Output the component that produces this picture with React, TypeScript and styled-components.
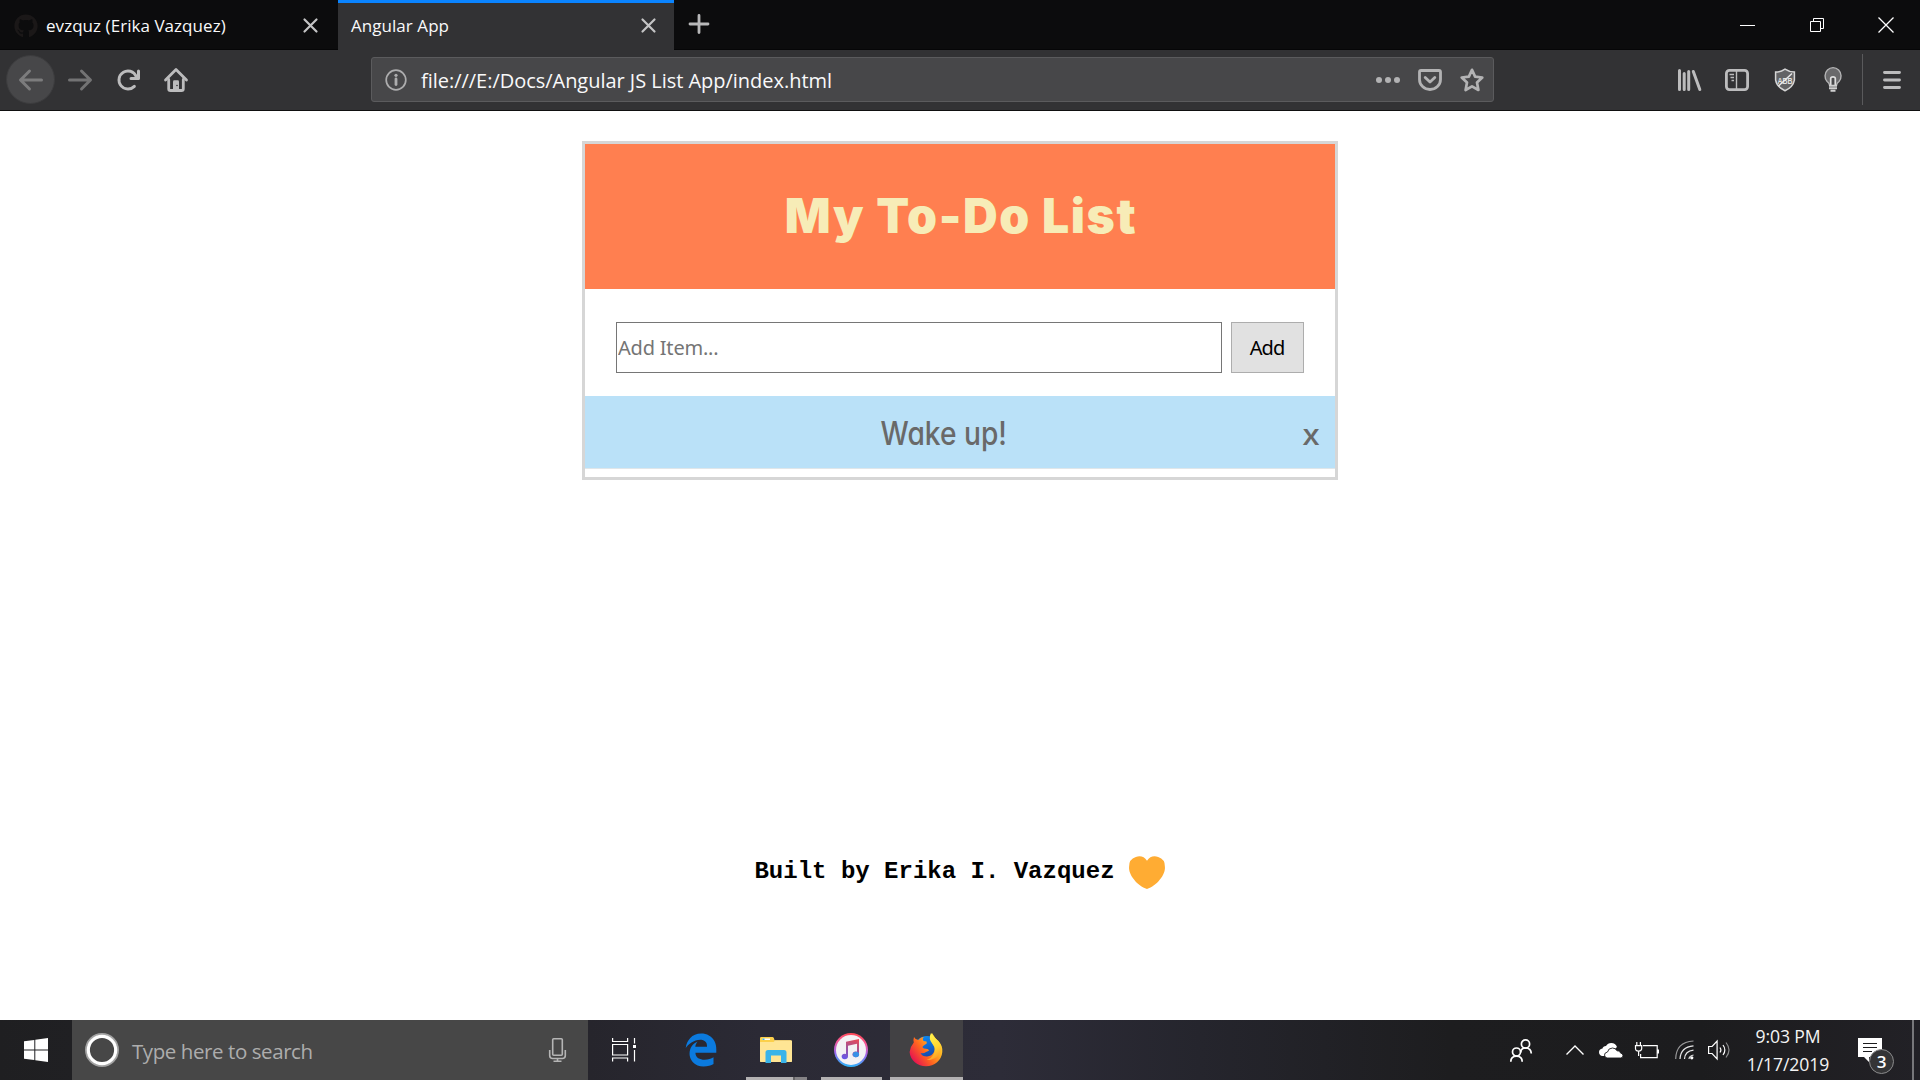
import React from "react";
import styled, { createGlobalStyle } from "styled-components";
import { FaEdgeLegacy, FaGithub } from "react-icons/fa";

const GlobalStyle = createGlobalStyle`
  *, *::before, *::after { box-sizing: border-box; }
  body { margin: 0; overflow: hidden; background: #fff; }
  button, input { margin: 0; font: inherit; }
`;

const ui = `"Open Sans", "Noto Sans", sans-serif`;

const Screen = styled.div`
  display: flex;
  flex-direction: column;
  width: 1920px;
  height: 1080px;
  font-family: ${ui};
`;

/* Icons */

const Glyph = styled.svg<{ $gap?: number }>`
  display: block;
  flex: none;
  margin-left: ${p => p.$gap ?? 0}px;
  overflow: visible;
`;

/* Browser tabs */

const TabStrip = styled.div`
  display: flex;
  flex: none;
  height: 50px;
  background: #0c0c0d;
`;

const Tab = styled.div<{ $active?: boolean; $width: number }>`
  display: flex;
  align-items: center;
  width: ${p => p.$width}px;
  padding: 1px ${p => (p.$active ? 18 : 20)}px 0 13px;
  color: #f9f9fa;
  font-size: 17px;
  background: ${p => (p.$active ? "#323234" : "transparent")};
  box-shadow: ${p => (p.$active ? "inset 0 3px #0a84ff" : "inset 0 -1px #060607")};
`;

const Favicon = styled.span`
  display: flex;
  margin: 1px 8px 0 1px;
  font-size: 24px;
  color: #1b1818;
`;

const TabTitle = styled.span`
  flex: 1;
  white-space: nowrap;
  letter-spacing: 0.05px;
`;

const StripFill = styled.div`
  display: flex;
  flex: 1;
  justify-content: space-between;
  box-shadow: inset 0 -1px #060607;
`;

const NewTab = styled.div`
  padding: 14px 0 0 14px;
`;

const WindowControls = styled.div`
  display: flex;
`;

const WindowControl = styled.div`
  display: grid;
  place-items: center;
  width: 69px;
  height: 50px;
`;

/* Navigation bar */

const NavBar = styled.div`
  display: flex;
  flex: none;
  align-items: center;
  height: 61px;
  padding: 0 0 1px 6px;
  background: #323234;
  border-bottom: 1px solid #0f0f10;
`;

const BackButton = styled.div`
  display: grid;
  place-items: center;
  width: 49px;
  height: 49px;
  background: #474749;
  border: 1px solid #3c3c3e;
  border-radius: 50%;
`;

const UrlBar = styled.div`
  display: flex;
  align-items: center;
  width: 1123px;
  height: 45px;
  margin-left: 183px;
  padding: 0 9px 0 13px;
  background: #474749;
  border: 1px solid #5b5b5d;
  border-radius: 3px;
`;

const UrlText = styled.span`
  flex: 1;
  padding: 1px 0 0 14px;
  color: #f9f9fa;
  font-size: 20px;
  letter-spacing: -0.03px;
  white-space: nowrap;
`;

const Divider = styled.div`
  width: 1px;
  height: 51px;
  margin: 0 20px 0 17px;
  background: #5a5a5c;
`;

/* Web page */

const Page = styled.main`
  display: flex;
  flex: 1;
  flex-direction: column;
  align-items: center;
  padding-top: 30px;
  background: #fff;
`;

const Card = styled.section`
  width: 756px;
  height: 339px;
  border: 3px solid #d6d6d6;
`;

const CardHeader = styled.header`
  display: grid;
  place-items: center;
  height: 145px;
  padding: 0 0 1px 2px;
  background: #ff7f50;
`;

const Title = styled.h1`
  margin: 0;
  color: #f7ecb7;
  font: 900 48px/56px Inter, "Open Sans", sans-serif;
  letter-spacing: 1.6px;
  white-space: nowrap;
`;

const AddForm = styled.form`
  display: flex;
  gap: 9px;
  height: 107px;
  padding: 33px 31px 23px;
  font: 20px "Noto Sans", sans-serif;
`;

const ItemInput = styled.input`
  width: 606px;
  height: 51px;
  padding: 0 1px;
  border: 1px solid #767676;
  border-radius: 0;
  outline: 0;
  letter-spacing: -0.2px;
  &::placeholder { color: #757575; opacity: 1; }
`;

const AddButton = styled.button`
  width: 73px;
  height: 51px;
  padding: 0 1px 0 0;
  color: #000;
  background: #e1e1e1;
  border: 1px solid #adadad;
  border-radius: 0;
  letter-spacing: -1px;
`;

const Item = styled.div`
  display: flex;
  align-items: center;
  height: 73px;
  padding: 4px 16px 0 0;
  color: #696969;
  background: #bae1f8;
  border-bottom: 1px solid #dfe6ea;
  font: 500 32px/40px Inter, sans-serif;
  font-feature-settings: "cv11" 1;
`;

const ItemText = styled.span`
  flex: 1;
  text-align: center;
  white-space: nowrap;
`;

const Narrow = styled.span`
  display: inline-block;
  transform: scaleX(0.88);
`;

const RemoveItem = styled.span`
  padding-top: 1px;
  font-size: 29px;
  transform: scaleX(1.12);
`;

const Footer = styled.footer`
  display: flex;
  align-items: center;
  gap: 14px;
  height: 40px;
  margin-top: 372px;
  padding-right: 1px;
  color: #000;
  font: bold 24px/28px "Liberation Mono", monospace;
  white-space: pre;
`;

const Heart = styled(Glyph)`
  margin-top: 2px;
`;

/* Taskbar */

const Taskbar = styled.div`
  display: flex;
  flex: none;
  height: 60px;
  background: linear-gradient(90deg, #1f1f21 0, #202023 72px, #26252c 590px, #2b2a35 760px, #2d2c38 1000px, #25252d 1200px, #1d1d1f 1450px, #1c1c1e 1700px, #222126 1920px);
`;

const StartButton = styled.div`
  display: grid;
  place-items: center;
  width: 72px;
`;

const SearchBox = styled.div`
  display: flex;
  align-items: center;
  width: 516px;
  padding: 0 22px 0 13px;
  background: #474747;
`;

const SearchText = styled.span`
  flex: 1;
  padding: 1px 0 0 13px;
  color: #adadad;
  font-size: 20.5px;
  letter-spacing: -0.42px;
`;

const TaskButton = styled.div<{ $width: number; $gap?: number; $active?: boolean }>`
  display: flex;
  flex-direction: column;
  align-items: center;
  justify-content: center;
  width: ${p => p.$width}px;
  margin-left: ${p => p.$gap ?? 0}px;
  background: ${p => (p.$active ? "#424144" : "transparent")};
`;

const AppSlot = styled.div<{ $nudge?: number }>`
  display: grid;
  flex: 1;
  place-items: center;
  padding: 3px ${p => p.$nudge ?? 0}px 0 0;
`;

const RunningBar = styled.div<{ $width: number; $stacked?: boolean }>`
  width: ${p => p.$width}px;
  height: 3px;
  background: ${p => (p.$stacked ? "linear-gradient(90deg, #b3b1b2 47px, #656466 47px 49px, #858386 49px)" : "#b3b1b2")};
`;

const Tray = styled.div`
  display: flex;
  align-items: center;
  margin-left: auto;
`;

const Clock = styled.div`
  width: 90px;
  margin-left: 13px;
  color: #f4f4f4;
  font-size: 17.6px;
  line-height: 28px;
  letter-spacing: -0.1px;
  text-align: center;
`;

const Notifications = styled.div`
  position: relative;
  width: 24px;
  margin-left: 25px;
`;

const Badge = styled.span`
  position: absolute;
  left: 11px;
  top: 11px;
  width: 25px;
  height: 25px;
  color: #fff;
  background: #343436;
  border: 1px solid #8b8b8c;
  border-radius: 50%;
  font: 600 17px/23px ${ui};
  text-align: center;
`;

const ShowDesktop = styled.div`
  align-self: stretch;
  width: 8px;
  margin-left: 30px;
  border-left: 2px solid #77777a;
`;

const light = "#bcbcbd";

const TabClose = () => (
  <Glyph width="15" height="15" viewBox="0 0 15 15" stroke="#c4c4c5" strokeWidth="2.2" strokeLinecap="round">
    <path d="M1.5 1.5l12 12M13.5 1.5l-12 12" />
  </Glyph>
);

const arrowPath =
  "M15 7H3.414l4.293-4.293a1 1 0 0 0-1.414-1.414l-6 6a1 1 0 0 0 0 1.414l6 6a1 1 0 0 0 1.414-1.414L3.414 9H15a1 1 0 0 0 0-2z";

function Tabs() {
  return (
    <TabStrip>
      <Tab $width={338}>
        <Favicon><FaGithub /></Favicon>
        <TabTitle>evzquz (Erika Vazquez)</TabTitle>
        <TabClose />
      </Tab>
      <Tab $width={336} $active>
        <TabTitle>Angular App</TabTitle>
        <TabClose />
      </Tab>
      <StripFill>
        <NewTab>
          <Glyph width="22" height="20" viewBox="0 0 22 20" stroke="#b8b8b9" strokeWidth="2.8" strokeLinecap="round">
            <path d="M11 1.4v17.2M2 10h18" />
          </Glyph>
        </NewTab>
        <WindowControls>
          <WindowControl>
            <Glyph width="15" height="1" viewBox="0 0 15 1"><rect width="15" height="1" fill="#fff" /></Glyph>
          </WindowControl>
          <WindowControl>
            <Glyph width="14" height="14" viewBox="0 0 14 14" fill="none" stroke="#fff">
              <path d="M.5 3.5h10v10H.5zM3.5 3.5v-3h10v10h-3" />
            </Glyph>
          </WindowControl>
          <WindowControl>
            <Glyph width="16" height="16" viewBox="0 0 16 16" stroke="#fff" strokeWidth="1.3"><path d="M.5.5l15 15M15.5.5l-15 15" /></Glyph>
          </WindowControl>
        </WindowControls>
      </StripFill>
    </TabStrip>
  );
}

function Navigation() {
  return (
    <NavBar>
      <BackButton>
        <Glyph width="24" height="24" viewBox="0 0 16 16" fill="#7c7c7d"><path d={arrowPath} /></Glyph>
      </BackButton>
      <Glyph $gap={13} width="24" height="24" viewBox="0 0 16 16" fill="#737374">
        <path transform="matrix(-1 0 0 1 16 0)" d={arrowPath} />
      </Glyph>
      <Glyph $gap={24} width="24" height="24" viewBox="0 0 16 16" fill={light}>
        <path d="M15 1a1 1 0 0 0-1 1v2.418A6.995 6.995 0 1 0 8 15a6.954 6.954 0 0 0 4.95-2.05 1 1 0 0 0-1.414-1.414A5.019 5.019 0 1 1 12.549 6H10a1 1 0 0 0 0 2h5a1 1 0 0 0 1-1V2a1 1 0 0 0-1-1z" />
      </Glyph>
      <Glyph $gap={24} width="24" height="24" viewBox="0 0 24 24" fill="none" stroke={light} strokeLinecap="round" strokeLinejoin="round">
        <path d="M1.5 12L12 1.6 22.5 12" strokeWidth="2.8" />
        <path d="M4.7 11.5v9.200q0 1.800 1.800 1.800h11q1.800 0 1.800-1.800v-9.200" strokeWidth="2.8" />
        <path d="M9 22v-8.500q0-1.300 1.300-1.300h3.400q1.300 0 1.300 1.300V22z" fill={light} stroke="none" />
        <circle cx="13" cy="17.5" r=".8" fill="#323234" stroke="none" />
      </Glyph>
      <UrlBar>
        <Glyph width="22" height="22" viewBox="0 0 22 22" fill="none" stroke="#adadae">
          <circle cx="11" cy="11" r="9.8" strokeWidth="1.7" />
          <path d="M11 10v5.5" strokeWidth="2.8" strokeLinecap="round" />
          <circle cx="11" cy="6.3" r="1.6" fill="#adadae" stroke="none" />
        </Glyph>
        <UrlText>file:///E:/Docs/Angular JS List App/index.html</UrlText>
        <Glyph width="24" height="6" viewBox="0 0 24 6" fill="#b3b3b4">
          <circle cx="3" cy="3" r="3" /><circle cx="12" cy="3" r="3" /><circle cx="21" cy="3" r="3" />
        </Glyph>
        <Glyph $gap={18} width="24" height="22" viewBox="0 0 24 22" fill="none" stroke="#b3b3b4" strokeWidth="2.8" strokeLinecap="round" strokeLinejoin="round">
          <path d="M3 1.500h18q1.500 0 1.500 1.500v7.500a10.500 10 0 0 1-21 0V3q0-1.500 1.500-1.500z" />
          <path d="M7.200 8.500l4.800 4.600 4.800-4.600" />
        </Glyph>
        <Glyph $gap={18} width="24" height="24" viewBox="0 0 24 24" fill="none" stroke="#b3b3b4" strokeWidth="2.7" strokeLinejoin="round">
          <path d="M12 1.800l3.100 6.800 7.200.9-5.300 5 1.400 7.500-6.400-3.700L5.600 22 7 14.500l-5.300-5 7.200-.9z" />
        </Glyph>
      </UrlBar>
      <Glyph $gap={184} width="24" height="22" viewBox="0 0 24 22" fill="none" stroke={light} strokeWidth="3" strokeLinecap="round">
        <path d="M1.500 1.500v19M6.200 4.500v16M10.700 2.500v18M15.300 2.500l6.500 18" />
      </Glyph>
      <Glyph $gap={23} width="24" height="22" viewBox="0 0 24 22" fill="none" stroke={light}>
        <rect x="1.4" y="1.4" width="21.2" height="19.2" rx="3" strokeWidth="2.8" />
        <path d="M11.500 2v18" strokeWidth="1.4" />
        <path d="M4.500 5.500h4.500M5.500 8.500H9M6.500 11.500H9" strokeWidth="1.5" />
      </Glyph>
      <Glyph $gap={24} width="24" height="24" viewBox="0 0 24 24">
        <path d="M12 1.200q4.300 2.900 9.400 2.900v8q-1.300 7-9.400 10.600Q3.900 19.100 2.600 12.100v-8q5.100 0 9.400-2.900z" fill="#636365" stroke="#d5d5d5" strokeWidth="1.5" />
        <text x="12" y="15.5" fill="#e2e2e2" fontFamily="Liberation Sans, sans-serif" fontSize="9" fontWeight="700" textAnchor="middle" textLength="15" lengthAdjust="spacingAndGlyphs">ABB</text>
        <path d="M5.500 18L19 5.500" stroke="#e8e8e8" strokeWidth="1.5" />
      </Glyph>
      <Glyph $gap={24} width="24" height="24" viewBox="0 0 24 24" fill="none" stroke="#b4b4b5">
        <path d="M8.500 17q-.2-2-2.400-3.500A8 8.300 0 1 1 18 13.500q-2.200 1.500-2.400 3.500z" fill="#69696b" strokeWidth="1.4" />
        <path d="M9.700 17.500V10.500q0-1.700 2.300-1.700t2.300 1.700v7" stroke="#dedede" strokeWidth="1.7" fill="#4a4a4c" />
        <path d="M8 17.800h8M8 20.300h8M9.500 22.800h5" stroke="#d0d0d0" strokeWidth="1.9" />
      </Glyph>
      <Divider />
      <Glyph width="18" height="20" viewBox="0 0 18 20" stroke={light} strokeWidth="2.9" strokeLinecap="round">
        <path d="M1.500 2.500h15M1.500 10h15M1.500 17.500h15" />
      </Glyph>
    </NavBar>
  );
}

function TodoPage() {
  return (
    <Page>
      <Card>
        <CardHeader><Title>My To-Do List</Title></CardHeader>
        <AddForm>
          <ItemInput placeholder="Add Item..." />
          <AddButton type="button">Add</AddButton>
        </AddForm>
        <Item>
          <ItemText><Narrow>Wake up!</Narrow></ItemText>
          <RemoveItem>x</RemoveItem>
        </Item>
      </Card>
      <Footer>
        Built by Erika I. Vazquez
        <Heart width="36" height="32" viewBox="0 0 36 32" fill="#ffac33">
          <path d="M35.900 9.700A9.800 9.800 0 0 0 18 3.800 9.800 9.800 0 0 0 .1 9.700C-.8 17.500 8.300 28.800 18 32c9.700-3.200 18.800-14.500 17.900-22.300z" />
        </Heart>
      </Footer>
    </Page>
  );
}

function FolderIcon() {
  return (
    <Glyph width="32" height="27" viewBox="0 0 32 27">
      <path d="M0 1.500Q0 0 1.500 0h10.500q1.500 0 2 1.500L14.500 3H30.500Q32 3 32 4.500V24q0 1-1 1H1q-1 0-1-1z" fill="#e7c66f" />
      <path d="M0 1.500Q0 0 1.500 0h10.500q1.500 0 2 1.500L14 5H0z" fill="#fcd04a" />
      <path d="M2.500 1.500h7.500v1.500H2.500z" fill="#fff" /><path d="M2.500 1.500h2v1.500h-2z" fill="#3fb4e8" />
      <path d="M0 5h13.500L15 3.800h17V24q0 1-1 1H1q-1 0-1-1z" fill="#ffe594" />
      <path d="M5.500 26V15.500q0-2.500 2.500-2.500h16q2.500 0 2.500 2.500V26h-5.500v-7.500h-10V26z" fill="#3ab4e9" />
    </Glyph>
  );
}

function ItunesIcon() {
  return (
    <Glyph width="34" height="34" viewBox="0 0 34 34">
      <defs>
        <linearGradient id="ring" x1=".5" y1="0" x2=".4" y2="1">
          <stop offset="0" stopColor="#ff4a55" /><stop offset=".3" stopColor="#f05a9e" />
          <stop offset=".62" stopColor="#9a68ee" /><stop offset="1" stopColor="#27b6f8" />
        </linearGradient>
        <linearGradient id="note" gradientUnits="userSpaceOnUse" x1="22" y1="6" x2="15" y2="27">
          <stop offset="0" stopColor="#e94a58" /><stop offset=".45" stopColor="#a85390" />
          <stop offset="1" stopColor="#6758e8" />
        </linearGradient>
      </defs>
      <circle cx="17" cy="17" r="17" fill="url(#ring)" />
      <circle cx="17" cy="17" r="15" fill="#f3f2f4" />
      <path d="M12 8.800l13-2.800v15.300a3.300 2.800 0 1 1-2-2.500v-8l-9 2v10.500a3.200 2.800 0 1 1-2-2.400z" fill="url(#note)" />
      <ellipse cx="22" cy="21.5" rx="3.1" ry="2.7" fill="#3991e6" />
    </Glyph>
  );
}

function FirefoxIcon() {
  return (
    <Glyph width="34" height="34" viewBox="0 0 34 34">
      <defs>
        <linearGradient id="fox" x1="1" y1=".1" x2=".1" y2=".8">
          <stop offset="0" stopColor="#fff34a" /><stop offset=".35" stopColor="#ffb020" />
          <stop offset=".65" stopColor="#ff6420" /><stop offset="1" stopColor="#e8164f" />
        </linearGradient>
        <linearGradient id="globe" x1=".3" y1="0" x2=".6" y2="1">
          <stop offset="0" stopColor="#0a8af4" /><stop offset="1" stopColor="#183a9c" />
        </linearGradient>
        <linearGradient id="flame" x1=".4" y1="0" x2=".7" y2="1">
          <stop offset="0" stopColor="#fff44f" /><stop offset=".55" stopColor="#ffd530" /><stop offset="1" stopColor="#ff9420" />
        </linearGradient>
      </defs>
      <circle cx="18" cy="16" r="13" fill="url(#globe)" />
      <path d="M5 4q-1 3-.2 5.500Q1 14 .6 19A16.400 15.500 0 0 0 33.300 19q.5-7-4.300-11-3-3-6-8-3 6 1 11 3 4 1 8-2 4-7 4.500-5 0-6.500-3.500 3 1 5.500-1 2-1 3-1.200-.2-2-3-2-2.500 0-3.500-1.500 0-1.500 4-3.500.5-1.500 0-2.300-1.500-.4-3-.6Q13 5.500 15 4q-3.500 0-5.500 3Q6 6.500 5 4z" fill="url(#fox)" />
      <path d="M22 0q-3 6 1.500 11 4 5 1 10.500-2 4-7 5.500 9 0 13-6 4-7-1-13-4-3-7.500-8z" fill="url(#flame)" />
    </Glyph>
  );
}

function WindowsTaskbar() {
  return (
    <Taskbar>
      <StartButton>
        <Glyph width="24" height="24" viewBox="0 0 24 24" fill="#fff">
          <path d="M0 3.300l10.300-1.400v9.600H0zM11.300 1.700L24 0v11.500H11.300zM0 12.500h10.300v9.600L0 20.700zM11.300 12.500H24V24l-12.700-1.700z" />
        </Glyph>
      </StartButton>
      <SearchBox>
        <Glyph width="34" height="34" viewBox="0 0 34 34" fill="none">
          <circle cx="17" cy="17" r="16" stroke="#a2a2a2" strokeWidth="2" />
          <circle cx="17" cy="17" r="13.7" stroke="#fff" strokeWidth="3.2" />
        </Glyph>
        <SearchText>Type here to search</SearchText>
        <Glyph width="17" height="24" viewBox="0 0 17 24" fill="none" stroke="#b5b5b5" strokeWidth="1.6">
          <rect x="3.7" y=".7" width="9.6" height="16.6" rx="1" />
          <path d="M.7 12v5.500q0 3 3 3h9.600q3 0 3-3V12M8.500 20.500V23M4.500 23.300h8" />
        </Glyph>
      </SearchBox>
      <TaskButton $width={72}>
        <Glyph width="24" height="24" viewBox="0 0 24 24" fill="none" stroke="#fff" strokeWidth="1.2">
          <path d="M.6 0v3.500h15V0M.6 6.500h15v10.500H.6zM.6 23.500V20h15v3.500M22.500 0v5.500M22.500 12v11.500" />
          <rect x="21" y="7" width="3" height="3" fill="#fff" stroke="none" />
        </Glyph>
      </TaskButton>
      <TaskButton $width={74} $gap={4}>
        <FaEdgeLegacy size={34} color="#0b7ade" />
      </TaskButton>
      <TaskButton $width={75} $gap={1}>
        <AppSlot $nudge={2}><FolderIcon /></AppSlot>
        <RunningBar $width={61} $stacked />
      </TaskButton>
      <TaskButton $width={74}>
        <AppSlot><ItunesIcon /></AppSlot>
        <RunningBar $width={61} />
      </TaskButton>
      <TaskButton $width={73} $gap={2} $active>
        <AppSlot $nudge={1}><FirefoxIcon /></AppSlot>
        <RunningBar $width={73} />
      </TaskButton>
      <Tray>
        <Glyph width="22" height="23" viewBox="0 0 22 23" fill="none" stroke="#fff" strokeWidth="1.7">
          <circle cx="15.5" cy="5" r="4.1" /><path d="M10.800 13.500q0-4.500 4.700-4.500 5.500 0 5.800 5.500" />
          <circle cx="6.5" cy="13" r="4" /><path d="M.8 22.800q0-5.700 5.700-5.700t5.700 5.700" />
        </Glyph>
        <Glyph $gap={34} width="18" height="10" viewBox="0 0 18 10" fill="none" stroke="#fff" strokeWidth="1.4"><path d="M.5 9.500L9 1l8.500 8.500" /></Glyph>
        <Glyph $gap={15} width="24" height="15" viewBox="0 0 24 15">
          <path d="M3 13q-3-1-3-4t3.500-3.500Q4 3 7 3q1.800-3 5.200-3Q16.500 0 18 4L8 13z" fill="#fff" />
          <path d="M8 15q-2.500-.5-2.500-3T8.500 9q.8-4 5-4 3 0 4.500 2.800 3.300-.5 3.500 2.200 2.500.5 2.500 2.700 0 2.300-2.500 2.300z" fill="#fff" stroke="#1c1c1e" strokeWidth=".9" />
        </Glyph>
        <Glyph $gap={12} width="24" height="17" viewBox="0 0 24 17" fill="none" stroke="#fff" strokeWidth="1.2">
          <path d="M8 3.600h14.200v12H5.600V12M23.400 7.500v4M1.800 0v3.500M5.400 0v3.500M.5 3.600h6.200v3q0 2.500-3.100 2.500T.5 6.600zM3.600 9v5" />
        </Glyph>
        <Glyph $gap={16} width="19" height="20" viewBox="0 0 19 20" fill="none" stroke="#e7e7e8" strokeWidth="1.2">
          <path d="M.7 19Q1 2 18.500 1" stroke="#99999a" /><path d="M5 19Q5.500 7 18.500 5.800M9.500 19q.5-8 9-8.800M14 19q0-3 4.500-4" />
          <circle cx="16.8" cy="17.8" r="1.6" fill="#fff" stroke="none" />
        </Glyph>
        <Glyph $gap={14} width="22" height="20" viewBox="0 0 22 20" fill="none" stroke="#fff" strokeWidth="1.2">
          <path d="M.6 6.500h3.500l5-5.500v18l-5-5.500H.6z" /><path d="M12 7.500q1.800 2.500 0 5M15 5q3.700 5 0 10" />
          <path d="M18 2.500q6 7.500 0 15" stroke="#8a8a8b" />
        </Glyph>
        <Clock>9:03 PM<br />1/17/2019</Clock>
        <Notifications>
          <Glyph width="24" height="24" viewBox="0 0 24 24">
            <path d="M0 0h24v19H11v5l-5-5H0z" fill="#fff" />
            <path d="M5 5.500h14M5 9.500h14M5 13.500h9" stroke="#1c1c1e" strokeWidth="1.2" />
          </Glyph>
          <Badge>3</Badge>
        </Notifications>
        <ShowDesktop />
      </Tray>
    </Taskbar>
  );
}

export default function App() {
  return (
    <Screen>
      <GlobalStyle />
      <Tabs />
      <Navigation />
      <TodoPage />
      <WindowsTaskbar />
    </Screen>
  );
}
